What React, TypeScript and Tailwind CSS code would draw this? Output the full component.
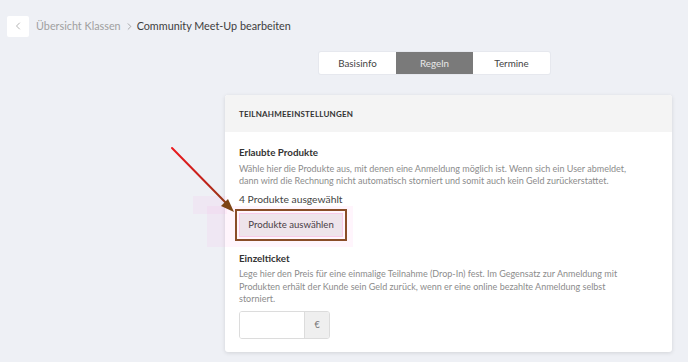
import { ChevronLeft, ChevronRight } from 'lucide-react'

const tabs = ['Basisinfo', 'Regeln', 'Termine']

export default function App() {
  return (
    <div className="relative w-[688px] h-[362px] overflow-hidden bg-[#eef0f5] font-['Lato',sans-serif] text-[#444]">
      {/* Breadcrumb */}
      <div className="flex items-center pl-[7px] pt-[15px] h-[37px]">
        <button className="w-[22px] h-[21px] bg-white rounded-[2px] flex items-center justify-center text-[#999]">
          <ChevronLeft className="w-3 h-3" strokeWidth={1.5} />
        </button>
        <span className="ml-[7px] text-[10.8px] text-[#a0a0a0]">Übersicht Klassen</span>
        <ChevronRight className="w-[11px] h-[11px] ml-[3px] mr-[2px] text-[#888]" strokeWidth={1.5} />
        <span className="text-[10.8px] text-[#3d3d3d]">Community Meet-Up bearbeiten</span>
      </div>

      {/* Tabs */}
      <div className="flex ml-[319px] mt-[15px] w-[231px] h-[22px] bg-white rounded-[2px] overflow-hidden shadow-[0_0_0_1px_#e6e8ee]">
        {tabs.map(t => (
          <div
            key={t}
            className={`flex-1 flex items-center justify-center text-[9.8px] ${
              t === 'Regeln' ? 'bg-[#7a7a7a] text-[#e8e8e8]' : 'text-[#444]'
            }`}
          >
            {t}
          </div>
        ))}
      </div>

      {/* Card */}
      <div className="ml-[225px] mt-[21px] w-[447px] bg-white rounded-[3px] shadow-[0_1px_4px_rgba(0,0,0,0.12)] overflow-hidden">
        <div className="h-[37px] bg-[#f4f4f4] flex items-center px-[14px] text-[8px] font-bold tracking-[0.2px] text-[#333]">
          TEILNAHMEEINSTELLUNGEN
        </div>
        <div className="px-[14px] pt-[14px] pb-[13px]">
          <p className="text-[9.8px] leading-[13px] font-bold text-[#333]">Erlaubte Produkte</p>
          <p className="mt-[4px] w-[395px] text-[9px] leading-[11.5px] text-[#8c8c8c]">
            Wähle hier die Produkte aus, mit denen eine Anmeldung möglich ist. Wenn sich ein User abmeldet,
            dann wird die Rechnung nicht automatisch storniert und somit auch kein Geld zurückerstattet.
          </p>
          <p className="mt-[7px] text-[10.3px] leading-[13px] text-[#444]">4 Produkte ausgewählt</p>
          <div className="relative mt-[3px] -ml-[4px] w-[112px] h-[32px] border-2 border-[#7d4514] p-[2px]">
            <div className="w-full h-full bg-[#ececec] border border-[#f6d2ea] flex items-center justify-center text-[9.6px] text-[#333]">
              Produkte auswählen
            </div>
          </div>

          <p className="mt-[11px] text-[9.8px] leading-[13px] font-bold text-[#333]">Einzelticket</p>
          <p className="mt-[3px] w-[395px] text-[9px] leading-[12.5px] text-[#8c8c8c]">
            Lege hier den Preis für eine einmalige Teilnahme (Drop-In) fest. Im Gegensatz zur Anmeldung mit
            Produkten erhält der Kunde sein Geld zurück, wenn er eine online bezahlte Anmeldung selbst
            storniert.
          </p>
          <div className="mt-[5px] flex w-[91px] h-[28px] border border-[#dcdcdc] rounded-[3px] overflow-hidden">
            <div className="flex-1 bg-white" />
            <div className="w-[25px] bg-[#efefef] border-l border-[#dcdcdc] flex items-center justify-center text-[9px] text-[#777]">
              €
            </div>
          </div>
        </div>
      </div>

      {/* Pink highlight behind button */}
      <div className="absolute left-[207px] top-[206px] w-[146px] h-[41px] bg-[#ff9be0]/10 pointer-events-none" />
      <div className="absolute left-[193px] top-[196px] w-[34px] h-[18px] bg-[#ff9be0]/10 pointer-events-none" />

      {/* Annotation arrow */}
      <svg className="absolute left-0 top-0 pointer-events-none" width="688" height="362">
        <defs>
          <linearGradient id="arr" x1="172" y1="148" x2="233" y2="211" gradientUnits="userSpaceOnUse">
            <stop offset="0" stopColor="#ec1a1f" />
            <stop offset="0.55" stopColor="#c0221a" />
            <stop offset="1" stopColor="#7d4514" />
          </linearGradient>
        </defs>
        <line x1="172" y1="148" x2="227" y2="204" stroke="url(#arr)" strokeWidth="2" strokeLinecap="round" />
        <polygon points="234,212 221,206 228,199" fill="#7d4514" />
      </svg>
    </div>
  )
}
